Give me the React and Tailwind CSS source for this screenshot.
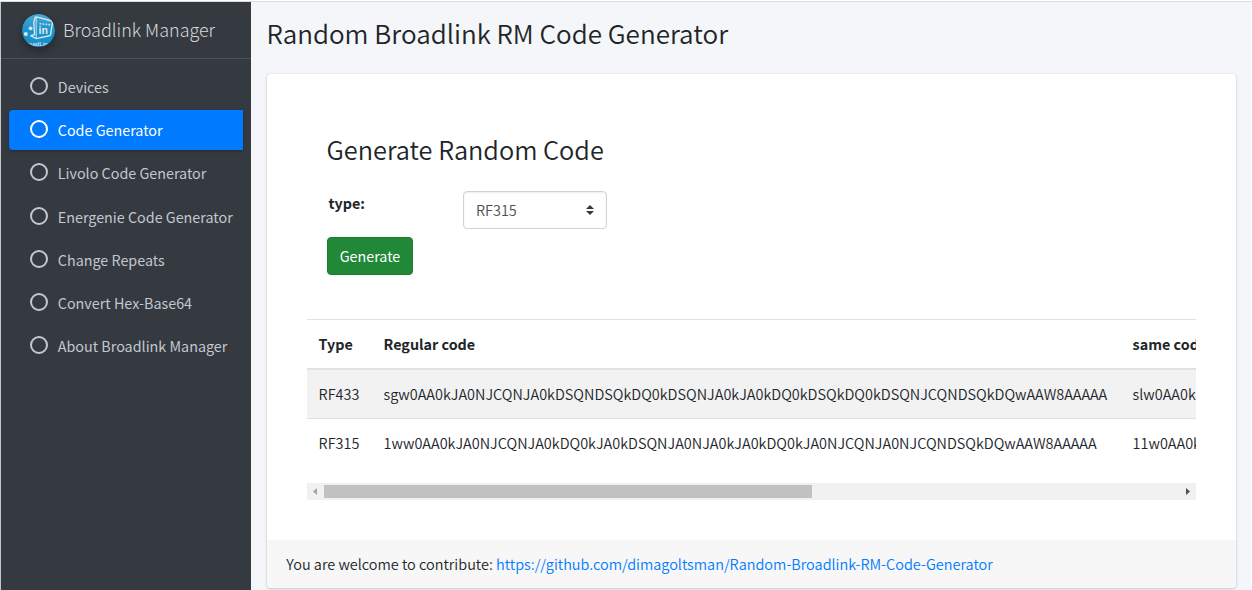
const navItems = [
  { label: 'Devices' },
  { label: 'Code Generator', active: true },
  { label: 'Livolo Code Generator' },
  { label: 'Energenie Code Generator' },
  { label: 'Change Repeats' },
  { label: 'Convert Hex-Base64' },
  { label: 'About Broadlink Manager' },
];

const rows = [
  {
    type: 'RF433',
    code: 'sgw0AA0kJA0NJCQNJA0kDSQNDSQkDQ0kDSQNJA0kJA0kDQ0kDSQkDQ0kDSQNJCQNDSQkDQwAAW8AAAAA',
    repeated: 'slw0AA0kJ',
  },
  {
    type: 'RF315',
    code: '1ww0AA0kJA0NJCQNJA0kDQ0kJA0kDSQNJA0NJA0kJA0kDQ0kJA0NJCQNJA0NJCQNDSQkDQwAAW8AAAAA',
    repeated: '11w0AA0kJ',
  },
];

function Logo() {
  return (
    <svg viewBox="0 0 33 33" className="size-[33px] rounded-full shadow-[0_4px_9px_rgba(0,0,0,0.3)]">
      <defs>
        <clipPath id="disc">
          <circle cx="16.5" cy="16.5" r="16.5" />
        </clipPath>
        <linearGradient id="blue" x1="0" y1="0" x2="0" y2="1">
          <stop offset="0" stopColor="#4aa9d4" />
          <stop offset="0.45" stopColor="#1b96ce" />
          <stop offset="1" stopColor="#138fcd" />
        </linearGradient>
      </defs>
      <g clipPath="url(#disc)">
        <rect width="33" height="33" fill="url(#blue)" />
        <path d="M13.6 2.6 L29.6 7 Q30.6 7.4 30.4 8.6 L28.6 20.4 Q28.4 21.4 27.4 21.7 L14.2 24.6 L8.6 21.6" fill="none" stroke="#dbe6eb" strokeWidth="1.4" />
        <path d="M13.4 2.6 L11.8 8.5 L12.6 20.6 L8.6 21.6" fill="none" stroke="#dbe6eb" strokeWidth="1.4" />
        <path d="M14.2 3 V24" stroke="#dbe6eb" strokeWidth="0.9" />
        <g fill="#dbe6eb">
          <circle cx="3.8" cy="20" r="2" />
          <circle cx="8.6" cy="14.3" r="1.9" />
          <rect x="17.6" y="9" width="1.6" height="1.6" />
          <rect x="20.6" y="9.3" width="1.6" height="1.6" />
          <rect x="23.6" y="9.6" width="1.6" height="1.6" />
          <rect x="26.4" y="9.9" width="1.6" height="1.6" />
        </g>
        <text x="16.6" y="20.2" fontSize="10.5" fontWeight="700" fill="#e3e9ec" fontFamily="Liberation Sans, sans-serif">in</text>
        <text x="4.6" y="32.3" fontSize="5.8" fontWeight="700" fill="#d0dde4" fontFamily="Liberation Sans, sans-serif">roadLin</text>
      </g>
    </svg>
  );
}

function NavItem({ label, active }) {
  return (
    <a
      className={
        'flex h-10 items-center rounded-l pl-[21px] ' +
        (active ? 'bg-[#007bff] text-white shadow-[0_1px_3px_rgba(0,0,0,0.3)]' : 'text-[#c2c7d0]')
      }
    >
      <svg viewBox="0 0 18 18" className="mr-[9.8px] mb-[2px] size-[18px] shrink-0">
        <circle cx="9" cy="9" r="8" fill="none" stroke="currentColor" strokeWidth="2" />
      </svg>
      <span className="text-[14.33px] leading-6 whitespace-nowrap">{label}</span>
    </a>
  );
}

function Sidebar() {
  return (
    <aside className="flex w-[250px] shrink-0 flex-col bg-[#343a40]">
      <div className="flex h-[57px] shrink-0 items-center border-b border-[#4b545c] pl-[21px]">
        <Logo />
        <span className="mb-0.5 ml-2 text-[17.95px] leading-[30px] font-light whitespace-nowrap text-[#d5d8da]">Broadlink Manager</span>
      </div>
      <nav className="flex flex-col gap-[3.2px] pt-[8px] pr-2 pl-2">
        {navItems.map((item) => (
          <NavItem key={item.label} label={item.label} active={item.active} />
        ))}
      </nav>
    </aside>
  );
}

function CodeTable() {
  return (
    <div className="w-[889px] overflow-hidden">
      <div className="h-[164px] overflow-hidden">
        <table className="w-[1600px] table-fixed border-collapse text-left text-[14.46px] leading-6 font-[350] whitespace-nowrap">
          <colgroup>
            <col className="w-[64.6px]" />
            <col className="w-[749px]" />
            <col />
          </colgroup>
          <thead>
            <tr className="h-[49px] border-t border-b-2 border-[#dee2e6] text-[14.33px] font-bold">
              <th className="px-[11.6px] pt-px pb-0">Type</th>
              <th className="px-3 pt-px pb-0">Regular code</th>
              <th className="px-3 pt-px pb-0">same code</th>
            </tr>
          </thead>
          <tbody>
            {rows.map((row) => (
              <tr key={row.type} className="h-[49.5px] border-t border-[#dee2e6] first:border-t-2 odd:bg-[#f2f2f2]">
                <td className="px-[11.6px] py-0">{row.type}</td>
                <td className="px-3 py-0">{row.code}</td>
                <td className="px-3 py-0">{row.repeated}</td>
              </tr>
            ))}
          </tbody>
        </table>
      </div>
      <div className="flex h-[17px] items-center bg-[#f1f1f1]">
        <svg viewBox="0 0 17 17" className="size-[17px]">
          <path d="M10 5 V12 L6 8.5 Z" fill="#a3a3a3" />
        </svg>
        <div className="h-[13px] w-[488px] bg-[#c1c1c1]" />
        <svg viewBox="0 0 17 17" className="ml-auto size-[17px]">
          <path d="M7 5 V12 L11 8.5 Z" fill="#505050" />
        </svg>
      </div>
    </div>
  );
}

export default function App() {
  return (
    <div className="flex h-[590px] w-[1252px] flex-col overflow-hidden bg-white font-['Noto_Sans_CJK_SC','Noto_Sans',sans-serif] text-[#212529]">
      <div className="mt-px h-px shrink-0 bg-[#d9dddc]" />
      <div className="flex min-h-0 flex-1 border-l border-[#c4c6c8]">
        <Sidebar />
        <main className="mr-px flex-1 bg-[#f4f6f9] pr-[15px] pl-4">
          <h1 className="-ml-[0.5px] flex h-[72px] items-start pt-[13px] text-[26.03px] leading-9 font-[350] whitespace-nowrap">Random Broadlink RM Code Generator</h1>
          <section className="flex h-[514px] flex-col overflow-hidden rounded bg-white shadow-[0_0_1px_rgba(0,0,0,0.125),0_1px_3px_rgba(0,0,0,0.2)]">
            <div className="flex-1 px-10 pt-[58px]">
              <div className="pl-5">
                <h2 className="-ml-[0.5px] text-[25.32px] leading-[34px] font-[350] whitespace-nowrap">Generate Random Code</h2>
                <div className="mt-[25px] flex h-[38px] items-start">
                  <label className="w-[136px] pl-[1.5px] text-[14.33px] leading-6 font-bold">type:</label>
                  <div className="flex h-[38px] w-[144px] items-center justify-between rounded border border-[#ced4da] pr-3 pl-3 text-[14.46px] leading-6 font-[350] text-[#495057] shadow-[inset_0_1px_2px_rgba(0,0,0,0.075)]">
                    RF315
                    <svg viewBox="0 0 8 10" className="h-[10px] w-2">
                      <path d="M4 0 L8 4 H0 Z M0 6 H8 L4 10 Z" fill="#343a40" />
                    </svg>
                  </div>
                </div>
                <button className="mt-2 flex h-[38px] w-[86px] items-center justify-center rounded border border-[#1e7e34] bg-[#218838] text-[14.33px] leading-6 text-white">
                  Generate
                </button>
              </div>
              <div className="mt-[44px]">
                <CodeTable />
              </div>
            </div>
            <footer className="flex h-12 items-center bg-[#f7f7f7] pl-[19.3px] text-[14.47px] leading-6 font-[350] whitespace-pre">
              <span>You are welcome to contribute: </span>
              <a className="text-[#007bff]">https://github.com/dimagoltsman/Random-Broadlink-RM-Code-Generator</a>
            </footer>
          </section>
        </main>
      </div>
    </div>
  );
}
